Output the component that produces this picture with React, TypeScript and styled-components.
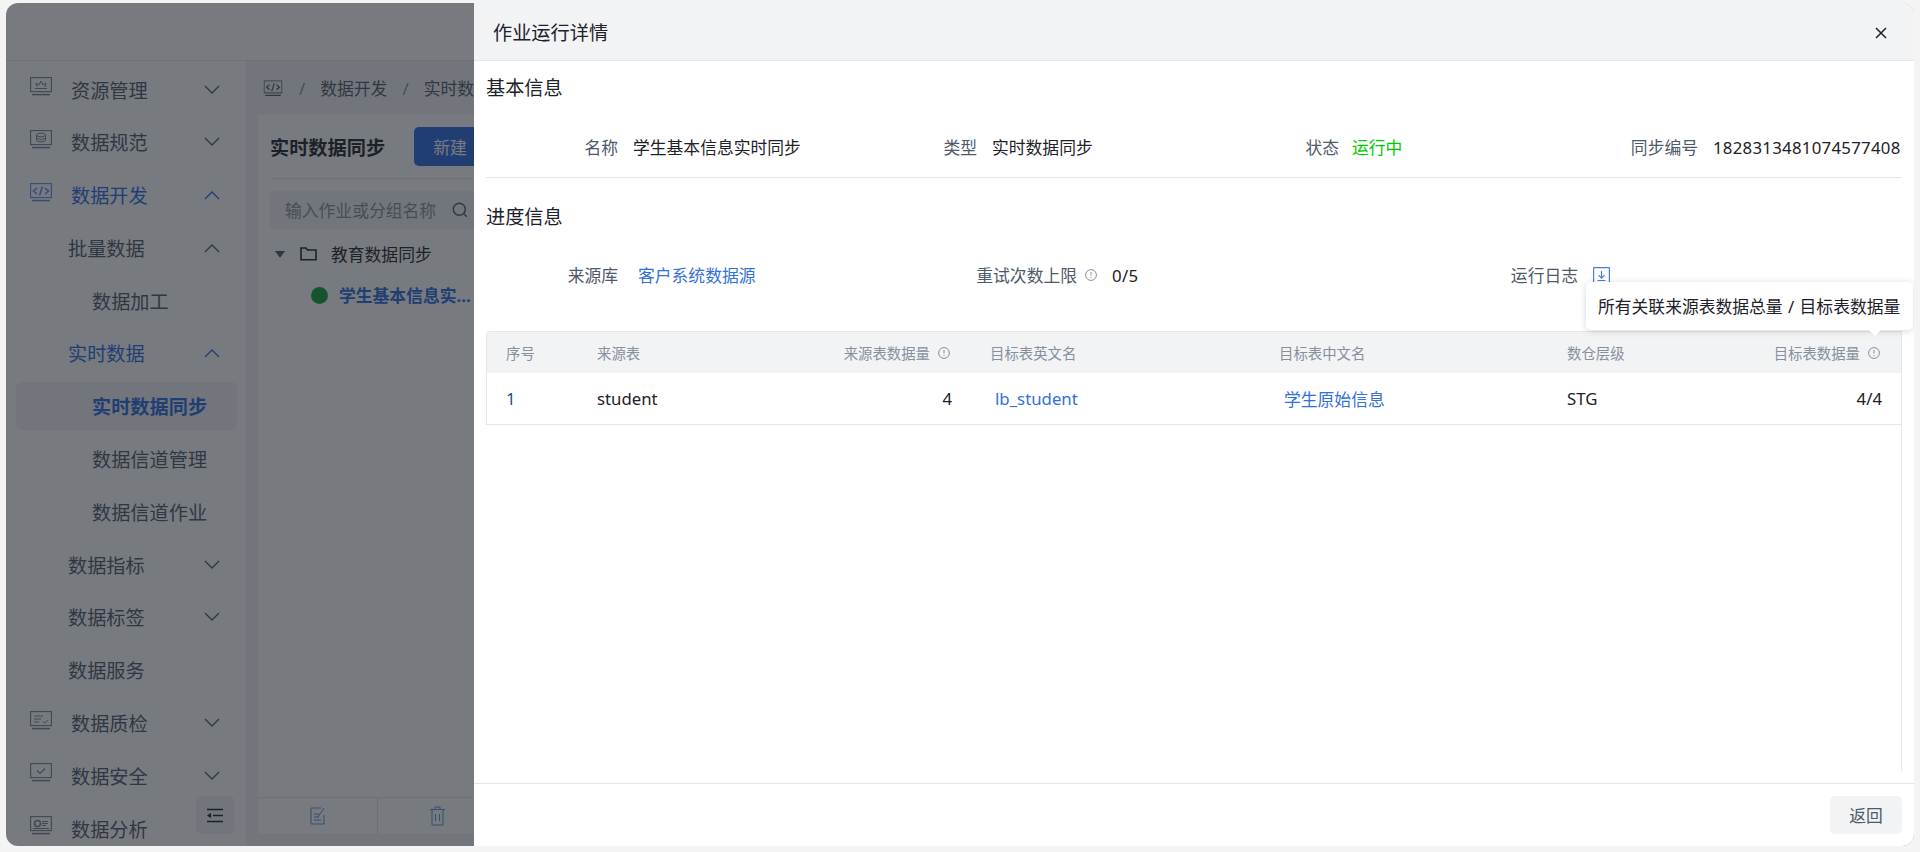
import styled, { createGlobalStyle } from "styled-components";

const GlobalStyle = createGlobalStyle`
  html, body {
    margin: 0;
    padding: 0;
    overflow: hidden;
  }
  * {
    box-sizing: border-box;
  }
  body {
    font-family: "Noto Sans", "Noto Sans CJK SC", sans-serif;
    font-size: 16.8px;
    color: #1d2129;
  }
`;

type NavItem = {
  label: string;
  level: 0 | 1 | 2;
  icon?: string;
  arrow?: "up" | "down";
  active?: boolean;
  selected?: boolean;
};

const navItems: NavItem[] = [
  { label: "资源管理", level: 0, icon: "resource", arrow: "down" },
  { label: "数据规范", level: 0, icon: "standard", arrow: "down" },
  { label: "数据开发", level: 0, icon: "code", arrow: "up", active: true },
  { label: "批量数据", level: 1, arrow: "up" },
  { label: "数据加工", level: 2 },
  { label: "实时数据", level: 1, arrow: "up", active: true },
  { label: "实时数据同步", level: 2, active: true, selected: true },
  { label: "数据信道管理", level: 2 },
  { label: "数据信道作业", level: 2 },
  { label: "数据指标", level: 1, arrow: "down" },
  { label: "数据标签", level: 1, arrow: "down" },
  { label: "数据服务", level: 1 },
  { label: "数据质检", level: 0, icon: "quality", arrow: "down" },
  { label: "数据安全", level: 0, icon: "security", arrow: "down" },
  { label: "数据分析", level: 0, icon: "analysis" },
];

function Chevron({ up }: { up: boolean }) {
  return (
    <svg width="16" height="10" viewBox="0 0 16 10" fill="none" stroke="currentColor" strokeWidth="1.3">
      <path d={up ? "M1 9l7-7 7 7" : "M1 1l7 7 7-7"} />
    </svg>
  );
}

function MonitorIcon({ kind }: { kind: string }) {
  return (
    <svg width="22" height="19" viewBox="0 0 22 19" fill="none" stroke="currentColor" strokeWidth="1.1">
      <rect x="0.6" y="0.6" width="20.8" height="14" />
      <path d="M2 17.6h18" strokeWidth="1.5" />
      {kind === "resource" && <path d="M5 11.5h12M7 10l-1-4 3 2 2-4 2 4 3-2-1 4" strokeWidth="1" />}
      {kind === "standard" && (
        <>
          <ellipse cx="11" cy="5" rx="4.5" ry="1.8" strokeWidth="1" />
          <path d="M6.500 5v5c0 1 2 1.800 4.500 1.800s4.500-.8 4.500-1.800V5M6.500 7.500c0 1 2 1.800 4.500 1.800s4.500-.8 4.500-1.800" strokeWidth="1" />
        </>
      )}
      {kind === "code" && <path d="M7 5L3.500 8 7 11M15 5l3.500 3L15 11M12.500 3.500l-3 9" strokeWidth="1.5" />}
      {kind === "quality" && <path d="M4 5h9M4 8h7M4 11h5M13 10.500l1.800 1.500 3-3" strokeWidth="1" />}
      {kind === "security" && <path d="M7 7.500l3 3 5-5" strokeWidth="1.2" />}
      {kind === "analysis" && (
        <>
          <circle cx="7.500" cy="7.500" r="3" strokeWidth="1.600" />
          <path d="M12 5.500h6M12 7.500h6M12 9.500h4M3 12.500h16" strokeWidth="1.200" />
        </>
      )}
    </svg>
  );
}

function InfoIcon() {
  return (
    <svg width="12" height="12" viewBox="0 0 12 12" fill="none" stroke="#86909c" strokeWidth="1">
      <circle cx="6" cy="6" r="5.400" />
      <path d="M6 3v3.600M6 8v1" />
    </svg>
  );
}

function DownloadIcon() {
  return (
    <svg width="17" height="17" viewBox="0 0 17 17" fill="none" stroke="#4080e0" strokeWidth="1.200">
      <rect x="0.600" y="0.600" width="15.800" height="15.800" rx="0.500" />
      <path d="M8.500 4v7M5.500 8.200l3 3 3-3M4.500 13.500h8" />
    </svg>
  );
}

export default function App() {
  return (
    <>
      <GlobalStyle />
      <Page>
        <Frame>
          <TopBar />
          <Main>
            <Sidebar>
              {navItems.map((item) => (
                <NavRow key={item.label} $level={item.level} $active={item.active} $selected={item.selected}>
                  {item.icon && (
                    <NavIcon>
                      <MonitorIcon kind={item.icon} />
                    </NavIcon>
                  )}
                  <NavLabel>{item.label}</NavLabel>
                  {item.arrow && (
                    <NavArrow>
                      <Chevron up={item.arrow === "up"} />
                    </NavArrow>
                  )}
                </NavRow>
              ))}
              <CollapseButton>
                <svg width="18" height="15" viewBox="0 0 18 15" fill="none" stroke="#1d2129" strokeWidth="1.600">
                  <path d="M1 1.500h16M7 7.500h10M1 13.500h16" />
                  <path d="M5 4.800v5.400L1 7.500z" fill="#1d2129" stroke="none" />
                </svg>
              </CollapseButton>
            </Sidebar>
            <Content>
              <Breadcrumb>
                <CrumbIcon>
                  <MonitorIcon kind="code" />
                </CrumbIcon>
                <CrumbSep>/</CrumbSep>
                <span>数据开发</span>
                <CrumbSep>/</CrumbSep>
                <span>实时数据同步</span>
              </Breadcrumb>
              <Panel>
                <PanelHead>
                  <PanelTitle>实时数据同步</PanelTitle>
                  <PrimaryButton>新建</PrimaryButton>
                </PanelHead>
                <SearchBox>
                  <SearchText>输入作业或分组名称</SearchText>
                  <svg width="16" height="16" viewBox="0 0 16 16" fill="none" stroke="#4e5969" strokeWidth="1.400">
                    <circle cx="7.300" cy="7.300" r="6" />
                    <path d="M11.800 11.800l3 3" />
                  </svg>
                </SearchBox>
                <TreeGroup>
                  <Caret />
                  <svg width="17" height="14" viewBox="0 0 17 14" fill="none" stroke="#1d2129" strokeWidth="1.600">
                    <path d="M1 12.800V1h5l1.500 2H16v9.800z" />
                  </svg>
                  <span>教育数据同步</span>
                </TreeGroup>
                <TreeLeaf>
                  <StatusDot />
                  <LeafText>学生基本信息实时同步作业</LeafText>
                </TreeLeaf>
                <PanelTools>
                  <ToolCell>
                    <svg width="16" height="18" viewBox="0 0 16 18" fill="none" stroke="#5f8fdc" strokeWidth="1">
                      <path d="M11 1H1v16h13V8M4 7h5M4 10h5M4 13h7M8 10l6-9" />
                    </svg>
                  </ToolCell>
                  <ToolCell>
                    <svg width="17" height="20" viewBox="0 0 17 20" fill="none" stroke="#5f8fdc" strokeWidth="1">
                      <path d="M1 3.500h15M6 3.500V1h5v2.500M3 3.500V19h11V3.500M6.500 8v7M10.500 8v7" />
                    </svg>
                  </ToolCell>
                </PanelTools>
              </Panel>
            </Content>
          </Main>
          <Mask />
          <Drawer>
            <DrawerHead>
              <DrawerTitle>作业运行详情</DrawerTitle>
              <CloseIcon>
                <svg width="12" height="12" viewBox="0 0 12 12" fill="none" stroke="#1d2129" strokeWidth="1.500">
                  <path d="M1 1l10 10M11 1L1 11" />
                </svg>
              </CloseIcon>
            </DrawerHead>
            <DrawerBody>
              <SectionTitle>基本信息</SectionTitle>
              <BasicGrid>
                <Field>
                  <FieldLabel $width={132}>名称</FieldLabel>
                  <span>学生基本信息实时同步</span>
                </Field>
                <Field>
                  <FieldLabel $width={132}>类型</FieldLabel>
                  <span>实时数据同步</span>
                </Field>
                <Field>
                  <FieldLabel $width={132}>状态</FieldLabel>
                  <RunningText>运行中</RunningText>
                </Field>
                <Field>
                  <FieldLabel $width={132}>同步编号</FieldLabel>
                  <SyncId>1828313481074577408</SyncId>
                </Field>
              </BasicGrid>
              <SectionTitle $gap={26}>进度信息</SectionTitle>
              <ProgressGrid>
                <Field>
                  <FieldLabel $width={132}>来源库</FieldLabel>
                  <LinkText>客户系统数据源</LinkText>
                </Field>
                <Field>
                  <FieldLabel $width={139}>
                    重试次数上限
                    <LabelInfo>
                      <InfoIcon />
                    </LabelInfo>
                  </FieldLabel>
                  <RetryCount>0/5</RetryCount>
                </Field>
                <Field>
                  <FieldLabel $width={148}>运行日志</FieldLabel>
                  <DownloadIcon />
                </Field>
              </ProgressGrid>
              <TableWrap>
                <Table>
                  <HeadRow>
                    <HeadCell>序号</HeadCell>
                    <HeadCell>来源表</HeadCell>
                    <HeadCell $right>
                      来源表数据量
                      <HeadInfo>
                        <InfoIcon />
                      </HeadInfo>
                    </HeadCell>
                    <HeadCell>目标表英文名</HeadCell>
                    <HeadCell>目标表中文名</HeadCell>
                    <HeadCell>数仓层级</HeadCell>
                    <HeadCell $right>
                      目标表数据量
                      <HeadInfo>
                        <InfoIcon />
                      </HeadInfo>
                    </HeadCell>
                  </HeadRow>
                  <BodyRow>
                    <BodyCell>
                      <IndexText>1</IndexText>
                    </BodyCell>
                    <BodyCell>student</BodyCell>
                    <BodyCell $right>4</BodyCell>
                    <BodyCell>
                      <LinkText>lb_student</LinkText>
                    </BodyCell>
                    <BodyCell>
                      <LinkText>学生原始信息</LinkText>
                    </BodyCell>
                    <BodyCell>STG</BodyCell>
                    <BodyCell $right>4/4</BodyCell>
                  </BodyRow>
                </Table>
              </TableWrap>
            </DrawerBody>
            <DrawerFoot>
              <BackButton>返回</BackButton>
            </DrawerFoot>
            <Tooltip>所有关联来源表数据总量 / 目标表数据量</Tooltip>
          </Drawer>
        </Frame>
      </Page>
    </>
  );
}

const Page = styled.div`
  width: 1920px;
  height: 852px;
  padding: 3px 6px 6px;
  background: #f4f4f5;
  display: flex;
`;

const Frame = styled.div`
  position: relative;
  flex: 1;
  display: flex;
  flex-direction: column;
  overflow: hidden;
  border-radius: 12px;
  background: #ffffff;
`;

const TopBar = styled.div`
  height: 58px;
  flex-shrink: 0;
  border-bottom: 1px solid #e5e6eb;
  background: #ffffff;
`;

const Main = styled.div`
  flex: 1;
  display: flex;
  min-height: 0;
`;

const Sidebar = styled.div`
  position: relative;
  width: 240px;
  flex-shrink: 0;
  padding: 4.500px 9px 0 10px;
  display: flex;
  flex-direction: column;
  gap: 4.800px;
  background: #ffffff;
`;

const NavRow = styled.div<{ $level: number; $active?: boolean; $selected?: boolean }>`
  height: 48px;
  flex-shrink: 0;
  display: flex;
  align-items: center;
  padding-left: ${(p) => [14, 52, 76][p.$level]}px;
  padding-right: 17px;
  border-radius: 6px;
  font-size: 19.2px;
  font-weight: ${(p) => (p.$selected ? 700 : 400)};
  color: ${(p) => (p.$active ? "#2a6ae0" : "#4e5969")};
  background: ${(p) => (p.$selected ? "#f2f3f5" : "transparent")};
`;

const NavIcon = styled.span`
  display: flex;
  margin-right: 19px;
  margin-top: -6px;
  opacity: 0.75;
`;

const NavLabel = styled.span`
  flex: 1;
`;

const NavArrow = styled.span`
  display: flex;
`;

const CollapseButton = styled.div`
  position: absolute;
  left: 190px;
  bottom: 12px;
  width: 38px;
  height: 38px;
  display: flex;
  align-items: center;
  justify-content: center;
  border-radius: 5px;
  background: #f2f3f5;
`;

const Content = styled.div`
  flex: 1;
  padding-left: 12px;
  display: flex;
  flex-direction: column;
  background: #f2f3f5;
`;

const Breadcrumb = styled.div`
  height: 54px;
  flex-shrink: 0;
  display: flex;
  align-items: center;
  gap: 15px;
  padding-left: 4px;
  color: #4e5969;
`;

const CrumbIcon = styled.span`
  display: flex;
  transform: scale(0.86);
  color: #4e5969;
`;

const CrumbSep = styled.span`
  color: #86909c;
`;

const Panel = styled.div`
  width: 360px;
  flex: 1;
  margin-bottom: 12px;
  padding: 0 12px;
  display: flex;
  flex-direction: column;
  background: #ffffff;
`;

const PanelHead = styled.div`
  height: 64px;
  flex-shrink: 0;
  display: flex;
  align-items: center;
  gap: 29px;
  border-bottom: 1px solid #e5e6eb;
`;

const PanelTitle = styled.span`
  font-size: 19.2px;
  font-weight: 700;
  color: #1d2129;
`;

const PrimaryButton = styled.div`
  width: 72px;
  height: 39px;
  display: flex;
  align-items: center;
  justify-content: center;
  border-radius: 5px;
  color: #ffffff;
  background: #2a6ae0;
`;

const SearchBox = styled.div`
  width: 212px;
  height: 38px;
  flex-shrink: 0;
  margin-top: 12px;
  padding: 0 14px 0 15px;
  display: flex;
  align-items: center;
  justify-content: space-between;
  border-radius: 5px;
  background: #f2f3f5;
`;

const SearchText = styled.span`
  color: #86909c;
`;

const TreeGroup = styled.div`
  height: 38px;
  margin-top: 6px;
  flex-shrink: 0;
  padding-left: 5px;
  display: flex;
  align-items: center;
  gap: 14px;
  color: #1d2129;
`;

const Caret = styled.span`
  width: 0;
  height: 0;
  margin-right: 1px;
  border-left: 5px solid transparent;
  border-right: 5px solid transparent;
  border-top: 7px solid #4e5969;
`;

const TreeLeaf = styled.div`
  height: 38px;
  flex-shrink: 0;
  margin-top: 3px;
  padding-left: 41px;
  display: flex;
  align-items: center;
  gap: 11px;
`;

const StatusDot = styled.span`
  width: 17px;
  height: 17px;
  flex-shrink: 0;
  border-radius: 50%;
  background: #0fa035;
`;

const LeafText = styled.span`
  width: 135px;
  overflow: hidden;
  white-space: nowrap;
  text-overflow: ellipsis;
  font-weight: 700;
  color: #2a6ae0;
`;

const PanelTools = styled.div`
  height: 37px;
  margin: auto -12px 0;
  display: flex;
  flex-shrink: 0;
  border-top: 1px solid #e5e6eb;
`;

const ToolCell = styled.div`
  width: 120px;
  display: flex;
  align-items: center;
  justify-content: center;
  border-right: 1px solid #e5e6eb;
`;

const Mask = styled.div`
  position: absolute;
  inset: 0;
  background: rgba(29, 33, 41, 0.6);
`;

const Drawer = styled.div`
  position: absolute;
  top: 0;
  right: 0;
  bottom: 0;
  width: 1440px;
  display: flex;
  flex-direction: column;
  background: #ffffff;
`;

const DrawerHead = styled.div`
  height: 58px;
  flex-shrink: 0;
  padding: 0 27px 0 19px;
  display: flex;
  align-items: center;
  justify-content: space-between;
  border-bottom: 1px solid #e5e6eb;
  background: #f2f3f5;
`;

const DrawerTitle = styled.span`
  font-size: 19.2px;
  color: #1d2129;
`;

const CloseIcon = styled.span`
  display: flex;
  margin-top: 2px;
`;

const DrawerBody = styled.div`
  flex: 1;
  min-height: 0;
  padding: 0 12px;
  display: flex;
  flex-direction: column;
`;

const SectionTitle = styled.div<{ $gap?: number }>`
  height: 26px;
  line-height: 26px;
  margin-top: ${(p) => p.$gap ?? 14}px;
  font-size: 19.2px;
  color: #1d2129;
`;

const BasicGrid = styled.div`
  display: grid;
  grid-template-columns: 359px 362px 359px 1fr;
  padding: 32px 0 16px;
  border-bottom: 1px solid #e5e6eb;
`;

const ProgressGrid = styled.div`
  display: grid;
  grid-template-columns: 472px 472px 1fr;
  margin-top: 31px;
`;

const Field = styled.div`
  height: 28px;
  display: flex;
  align-items: center;
  gap: 15px;
  white-space: nowrap;
`;

const FieldLabel = styled.span<{ $width: number }>`
  width: ${(p) => p.$width}px;
  flex-shrink: 0;
  display: flex;
  align-items: center;
  justify-content: flex-end;
  color: #4e5969;
`;

const LabelInfo = styled.span`
  display: flex;
  margin-left: 8px;
`;

const RunningText = styled.span`
  margin-left: -2px;
  color: #00c800;
`;

const RetryCount = styled.span`
  letter-spacing: 0.3px;
`;

const SyncId = styled.span`
  letter-spacing: 0.27px;
`;

const LinkText = styled.span`
  padding-left: 5px;
  color: #3370d8;
`;

const TableWrap = styled.div`
  height: 440px;
  margin-top: 42px;
  flex-shrink: 0;
  border-right: 1px solid #e5e6eb;
`;

const Table = styled.div`
  display: flex;
  flex-direction: column;
  overflow: hidden;
  border: 1px solid #e5e6eb;
  border-right: none;
  border-radius: 4px 0 0 0;
`;

const columns = "91px 196px 197px 289px 288px 146px 207px";

const HeadRow = styled.div`
  display: grid;
  grid-template-columns: ${columns};
  height: 41px;
  background: #f2f3f5;
`;

const HeadCell = styled.div<{ $right?: boolean }>`
  display: flex;
  align-items: center;
  justify-content: ${(p) => (p.$right ? "flex-end" : "flex-start")};
  padding: 0 19px;
  font-size: 14.4px;
  color: #86909c;
`;

const HeadInfo = styled.span`
  display: flex;
  margin-left: 8px;
  margin-right: 2px;
`;

const BodyRow = styled.div`
  display: grid;
  grid-template-columns: ${columns};
  height: 51px;
`;

const BodyCell = styled.div<{ $right?: boolean }>`
  display: flex;
  align-items: center;
  justify-content: ${(p) => (p.$right ? "flex-end" : "flex-start")};
  padding: 0 19px;
  color: #1d2129;
`;

const IndexText = styled.span`
  color: #1d4f91;
`;

const DrawerFoot = styled.div`
  height: 63px;
  flex-shrink: 0;
  padding: 0 12px;
  display: flex;
  align-items: center;
  justify-content: flex-end;
  border-top: 1px solid #e5e6eb;
`;

const BackButton = styled.div`
  width: 72px;
  height: 38px;
  display: flex;
  align-items: center;
  justify-content: center;
  border-radius: 5px;
  color: #4e5969;
  background: #f2f3f5;
`;

const Tooltip = styled.div`
  position: absolute;
  top: 279px;
  left: 1112px;
  width: 327px;
  height: 48px;
  padding-left: 12px;
  display: flex;
  align-items: center;
  white-space: nowrap;
  word-spacing: 1px;
  border-radius: 5px;
  background: #ffffff;
  color: #1d2129;
  box-shadow: 0 1px 7px rgba(0, 0, 0, 0.16);

  &::after {
    content: "";
    position: absolute;
    left: 283px;
    bottom: -6px;
    border-left: 6px solid transparent;
    border-right: 6px solid transparent;
    border-top: 6px solid #ffffff;
  }
`;
